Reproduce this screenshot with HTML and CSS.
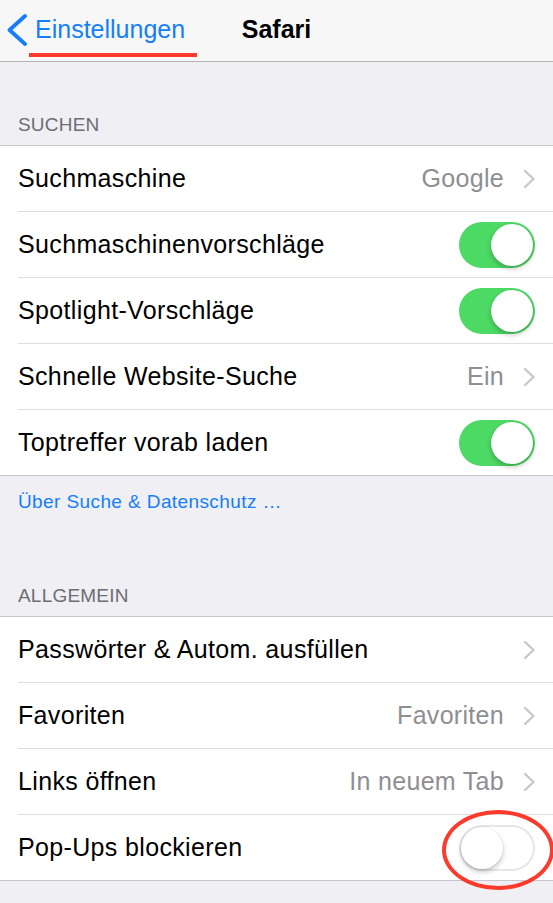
FILE: index.html
```html
<!DOCTYPE html>
<html lang="de">
<head>
<meta charset="utf-8">
<title>Safari</title>
<link rel="stylesheet" href="styles.css">
</head>
<body>
<div class="screen">
  <header class="nav">
    <a class="back">
      <svg class="back-chev" width="22" height="32" viewBox="0 0 22 32"><polyline points="19,2 3.5,16 19,30" fill="none" stroke="#157efb" stroke-width="3.8" stroke-linecap="round" stroke-linejoin="round"/></svg>
      <span class="back-label">Einstellungen</span>
    </a>
    <h1 class="nav-title">Safari</h1>
  </header>

  <div class="section-header first">SUCHEN</div>
  <div class="group">
    <div class="row"><div class="row-inner"><span class="label">Suchmaschine</span><span class="value">Google</span><span class="chev"><svg width="13" height="20" viewBox="0 0 13 20"><polyline points="2,2 10.5,10 2,18" fill="none" stroke="#c7c7cc" stroke-width="2.4" stroke-linecap="round" stroke-linejoin="round"/></svg></span></div></div>
    <div class="row"><div class="row-inner"><span class="label">Suchmaschinenvorschläge</span><span class="switch on"><span class="knob"></span></span></div></div>
    <div class="row"><div class="row-inner"><span class="label">Spotlight-Vorschläge</span><span class="switch on"><span class="knob"></span></span></div></div>
    <div class="row"><div class="row-inner"><span class="label">Schnelle Website-Suche</span><span class="value">Ein</span><span class="chev"><svg width="13" height="20" viewBox="0 0 13 20"><polyline points="2,2 10.5,10 2,18" fill="none" stroke="#c7c7cc" stroke-width="2.4" stroke-linecap="round" stroke-linejoin="round"/></svg></span></div></div>
    <div class="row"><div class="row-inner"><span class="label">Toptreffer vorab laden</span><span class="switch on"><span class="knob"></span></span></div></div>
  </div>
  <div class="footer"><a class="link">Über Suche &amp; Datenschutz …</a></div>

  <div class="section-header second">ALLGEMEIN</div>
  <div class="group">
    <div class="row"><div class="row-inner"><span class="label">Passwörter &amp; Autom. ausfüllen</span><span class="value"></span><span class="chev"><svg width="13" height="20" viewBox="0 0 13 20"><polyline points="2,2 10.5,10 2,18" fill="none" stroke="#c7c7cc" stroke-width="2.4" stroke-linecap="round" stroke-linejoin="round"/></svg></span></div></div>
    <div class="row"><div class="row-inner"><span class="label">Favoriten</span><span class="value">Favoriten</span><span class="chev"><svg width="13" height="20" viewBox="0 0 13 20"><polyline points="2,2 10.5,10 2,18" fill="none" stroke="#c7c7cc" stroke-width="2.4" stroke-linecap="round" stroke-linejoin="round"/></svg></span></div></div>
    <div class="row"><div class="row-inner"><span class="label">Links öffnen</span><span class="value">In neuem Tab</span><span class="chev"><svg width="13" height="20" viewBox="0 0 13 20"><polyline points="2,2 10.5,10 2,18" fill="none" stroke="#c7c7cc" stroke-width="2.4" stroke-linecap="round" stroke-linejoin="round"/></svg></span></div></div>
    <div class="row"><div class="row-inner"><span class="label">Pop-Ups blockieren</span><span class="switch off"><span class="knob"></span><span class="annot"></span></span></div></div>
  </div>
</div>
</body>
</html>
```
FILE: styles.css
```css
* { box-sizing: border-box; }
html, body { margin: 0; padding: 0; }
body {
  background: #efeff4;
  font-family: "Liberation Sans", Arial, sans-serif;
  color: #000;
  overflow: hidden;
}
.screen { width: 553px; height: 903px; background: #efeff4; }

.nav {
  position: relative;
  height: 62px;
  background: #f7f7f8;
  border-bottom: 1px solid #b2b2b2;
  display: flex;
  align-items: center;
}
.back {
  display: flex;
  align-items: center;
  padding-left: 6px;
  height: 100%;
  color: #157efb;
}
.back-chev { margin-top: -2px; }
.back-label {
  font-size: 25px;
  margin-left: 7px;
  padding-bottom: 2px;
  position: relative;
}
.back-label::after {
  content: "";
  position: absolute;
  left: -6px;
  right: -12px;
  bottom: -11px;
  height: 4px;
  background: #fc3b2d;
}
.nav-title {
  position: absolute;
  left: 0; right: 0;
  top: 0; bottom: 0;
  margin: 0;
  display: flex;
  align-items: center;
  justify-content: center;
  font-size: 25px;
  font-weight: bold;
  padding-bottom: 2px;
  pointer-events: none;
}

.section-header {
  font-size: 19px;
  line-height: 19px;
  color: #6d6d72;
  padding: 0 18px 11px;
  letter-spacing: 0.2px;
}
.section-header.first { padding-top: 53px; }
.section-header.second { padding-top: 75px; }

.group {
  background: #fff;
  border-top: 1px solid #c8c7cc;
  border-bottom: 1px solid #c8c7cc;
}
.row { padding-left: 18px; }
.row-inner {
  height: 65px;
  display: flex;
  align-items: center;
  padding-right: 18px;
}
.row + .row .row-inner {
  height: 66px;
  border-top: 1px solid #dedee2;
}
.label {
  font-size: 25px;
  letter-spacing: 0.35px;
  flex: 1;
  white-space: nowrap;
}
.value {
  font-size: 25px;
  color: #8e8e93;
  letter-spacing: 0.3px;
  margin-right: 19px;
}
.chev { display: flex; width: 13px; height: 20px; margin-right: -1px; }

.switch {
  position: relative;
  width: 76px;
  height: 46px;
  border-radius: 23px;
  display: flex;
  align-items: center;
  flex: none;
}
.switch.on {
  background: #4cd964;
  justify-content: flex-end;
  padding: 2px;
}
.switch.off {
  background: #fff;
  border: 2px solid #e5e5ea;
  justify-content: flex-start;
  padding: 0;
}
.knob {
  width: 42px;
  height: 42px;
  border-radius: 50%;
  background: #fff;
  box-shadow: 0 3px 5px rgba(0,0,0,0.22), 0 0 0 0.5px rgba(0,0,0,0.08);
}
.switch.off .knob { margin-left: 0; width: 42px; height: 42px; }

.footer { padding: 16px 18px 0; }
.link {
  font-size: 19px;
  line-height: 19px;
  color: #157efb;
  letter-spacing: 0.4px;
  display: block;
}

.annot {
  position: absolute;
  left: -19px;
  top: -17px;
  width: 112px;
  height: 80px;
  border: 4px solid #fc3b2d;
  border-radius: 50%;
  pointer-events: none;
}
```
